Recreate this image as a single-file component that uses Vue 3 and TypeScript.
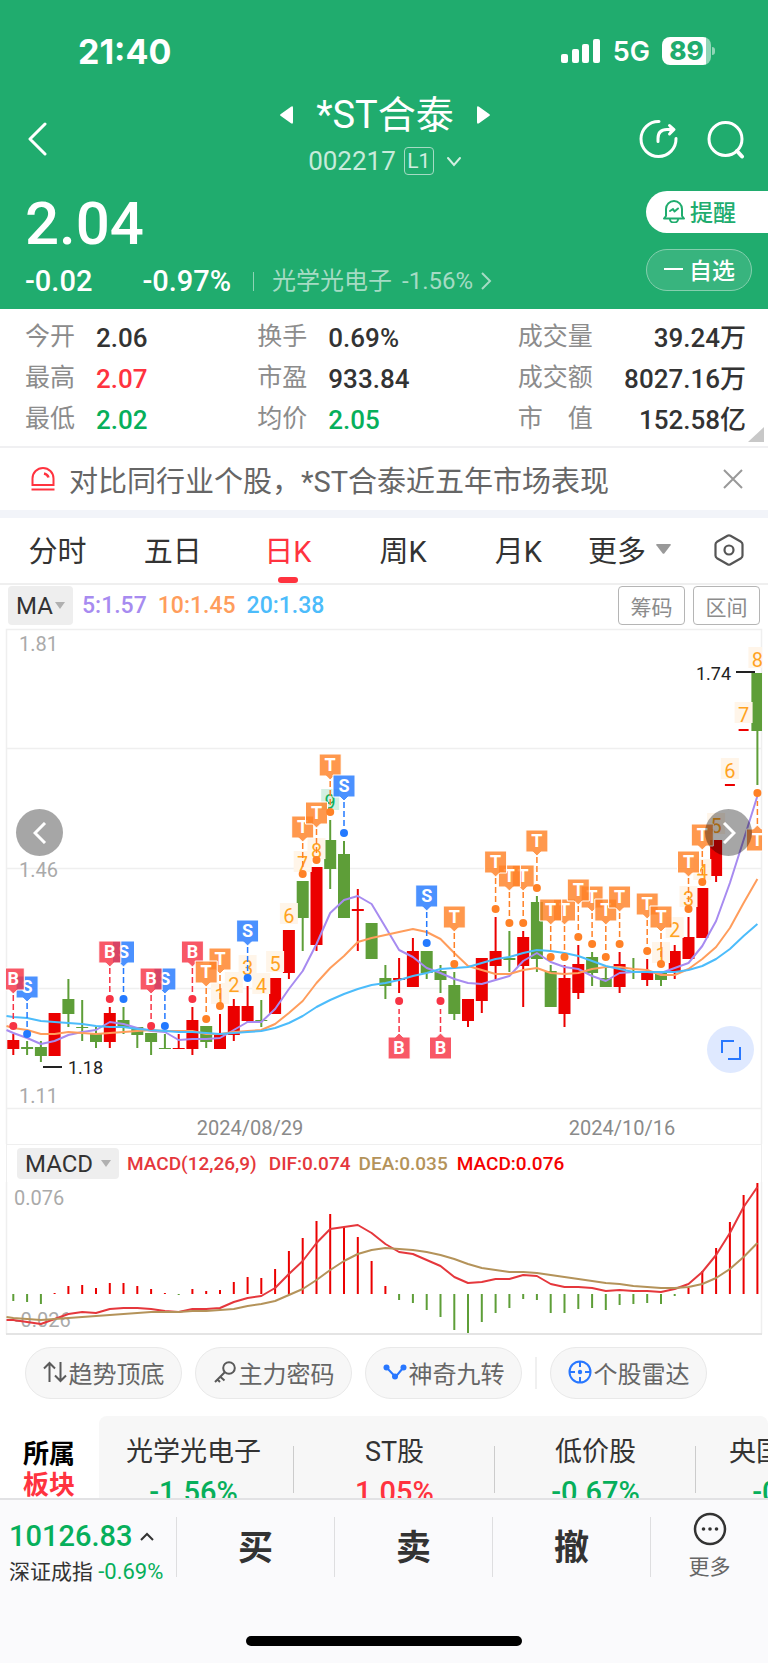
<script setup lang="ts">
import { ref } from 'vue'

type Tone = 'dark' | 'up' | 'down'
type Side = 'r' | 'g'
type Mark = 'B' | 'S' | 'T'

interface Stat { label: string; value: string; tone: Tone }

const stats: Stat[][] = [
  [
    { label: '今开', value: '2.06', tone: 'dark' },
    { label: '最高', value: '2.07', tone: 'up' },
    { label: '最低', value: '2.02', tone: 'down' },
  ],
  [
    { label: '换手', value: '0.69%', tone: 'dark' },
    { label: '市盈', value: '933.84', tone: 'dark' },
    { label: '均价', value: '2.05', tone: 'down' },
  ],
  [
    { label: '成交量', value: '39.24万', tone: 'dark' },
    { label: '成交额', value: '8027.16万', tone: 'dark' },
    { label: '市\u3000值', value: '152.58亿', tone: 'dark' },
  ],
]

const tabs = ['分时', '五日', '日K', '周K', '月K']
const activeTab = ref('日K')

const STEP = 13.78
const px = (i: number): number => Math.round((13.3 + STEP * i) * 10) / 10

// side, body top, body bottom, wick top, wick bottom
const candleRows: [Side, number, number, number, number][] = [
  ['r', 1040, 1049, 1034, 1055], ['g', 1047, 1049, 1041, 1055], ['g', 1047, 1056, 1041, 1062],
  ['r', 1013, 1056, 1013, 1056], ['g', 999, 1014, 979, 1027], ['g', 1027, 1028, 1000, 1041],
  ['g', 1034, 1042, 1027, 1048], ['r', 1013, 1042, 1007, 1048], ['g', 1020, 1028, 1007, 1034],
  ['g', 1027, 1035, 1027, 1048], ['g', 1033, 1042, 1033, 1055], ['g', 1048, 1049, 1034, 1049],
  ['r', 1048, 1049, 1034, 1049], ['r', 1020, 1049, 1007, 1055], ['g', 1026, 1042, 1026, 1048],
  ['r', 1034, 1049, 1014, 1049], ['r', 1006, 1035, 999, 1041], ['r', 1006, 1021, 986, 1023],
  ['g', 1020, 1021, 1000, 1027], ['r', 978, 1014, 978, 1014], ['r', 930, 973, 930, 979],
  ['g', 881, 918, 881, 951], ['r', 867, 945, 867, 951], ['g', 840, 869, 820, 889],
  ['g', 854, 918, 841, 918], ['r', 909, 911, 889, 951], ['g', 923, 959, 923, 959],
  ['g', 978, 986, 965, 999], ['r', 978, 980, 958, 993], ['r', 951, 987, 938, 987],
  ['g', 951, 973, 951, 979], ['g', 971, 980, 965, 993], ['g', 985, 1014, 972, 1020],
  ['r', 999, 1021, 999, 1027], ['r', 958, 1001, 958, 1013], ['r', 951, 966, 917, 979],
  ['g', 958, 960, 931, 972], ['r', 937, 966, 931, 1007], ['g', 902, 959, 896, 972],
  ['g', 971, 1007, 965, 1007], ['r', 978, 1014, 965, 1027], ['r', 964, 993, 945, 999],
  ['g', 957, 973, 952, 986], ['g', 978, 987, 967, 987], ['r', 964, 987, 952, 993],
  ['g', 972, 973, 958, 979], ['r', 971, 980, 959, 986], ['g', 971, 980, 971, 986],
  ['r', 951, 972, 945, 979], ['r', 937, 959, 917, 959], ['r', 888, 938, 888, 938],
  ['r', 840, 876, 840, 882], ['r', 784, 786, 784, 786], ['r', 729, 731, 729, 731],
  ['g', 673, 731, 673, 785],
]
const candles = candleRows.map(([side, top, bottom, high, low], i) => ({
  side, top, bottom, high, low, x: px(i), half: i === 52 || i === 53 ? 5 : i === 45 ? 1 : 6,
}))

const line = (first: number, ys: number[]): string =>
  [`6.5,${first}`, ...ys.map((y, i) => `${px(i)},${y}`)].join(' ')

const ma5 = line(1030, [1033, 1038, 1044, 1041, 1035, 1032, 1030, 1022, 1024, 1028, 1031, 1032, 1040, 1039, 1039,
  1038, 1030, 1022, 1022, 1009, 989, 971, 944, 913, 900, 896, 904, 927, 950, 957, 968, 973, 979, 983, 984, 980,
  976, 961, 953, 962, 967, 969, 976, 981, 973, 972, 972, 973, 968, 963, 946, 921, 883, 840, 796])
const ma10 = line(1026, [1028, 1030, 1034, 1034, 1032, 1033, 1034, 1033, 1032, 1031, 1030, 1031, 1031, 1031, 1034,
  1034, 1032, 1031, 1030, 1024, 1013, 1001, 983, 968, 956, 942, 938, 935, 932, 929, 932, 939, 953, 966, 970, 974,
  974, 970, 968, 973, 974, 973, 969, 967, 967, 969, 970, 975, 975, 969, 959, 947, 928, 903, 879])
const ma20 = line(1016, [1017, 1018, 1021, 1022, 1023, 1024, 1026, 1027, 1027, 1029, 1030, 1031, 1032, 1032, 1033,
  1034, 1033, 1032, 1031, 1028, 1023, 1016, 1007, 1000, 994, 989, 985, 983, 980, 976, 973, 969, 968, 967, 963, 959,
  957, 953, 950, 951, 953, 956, 961, 966, 969, 972, 972, 972, 972, 970, 966, 959, 949, 936, 924])

// mark, candle index, dot y, badge below the dot
const markRows: [Mark, number, number, boolean?][] = [
  ['S', 1, 1034], ['B', 0, 1026], ['S', 8, 999], ['B', 7, 999], ['S', 11, 1026], ['B', 10, 1026],
  ['B', 13, 999], ['T', 15, 1006], ['T', 14, 1019], ['S', 17, 978], ['T', 21, 874], ['T', 22, 860],
  ['T', 23, 812], ['S', 24, 833], ['S', 30, 943], ['T', 32, 964], ['B', 28, 1001, true], ['B', 31, 1001, true],
  ['T', 37, 923], ['T', 36, 923], ['T', 35, 909], ['T', 38, 888], ['T', 40, 957], ['T', 39, 957],
  ['T', 42, 944], ['T', 41, 937], ['T', 43, 957], ['T', 44, 944], ['T', 46, 951], ['T', 47, 964],
  ['T', 49, 909], ['T', 50, 882], ['T', 54, 793, true],
]
const marks = markRows.map(([kind, i, dot, below]) => {
  const x = px(i)
  const top = below ? dot + 36 : dot - 58
  const l = x - 11
  const r = x + 11
  const b = top + 22
  const shape = below
    ? `M${l} ${top}H${x - 4}L${x} ${top - 4}L${x + 4} ${top}H${r}V${b}H${l}Z`
    : `M${l} ${top}H${r}V${b}H${x + 4}L${x} ${b + 4}L${x - 4} ${b}H${l}Z`
  return { kind, x, dot, shape, textY: top + 17, y1: below ? top - 5 : b + 5, y2: below ? dot + 8 : dot - 6 }
})

const countRows: [string, number, number][] = [
  ['1', 15, 996], ['2', 16, 985], ['3', 17, 968], ['4', 18, 986], ['5', 19, 964], ['6', 20, 916], ['7', 21, 864],
  ['8', 22, 851], ['9', 23, 802], ['1', 47, 955], ['2', 48, 930], ['3', 49, 899], ['4', 50, 872], ['5', 51, 826],
  ['6', 52, 771], ['7', 53, 715], ['8', 54, 660],
]
const counts = countRows.map(([n, i, y]) => ({ n, x: px(i), y }))

const ZERO = 1294
const histogram = [1301, 1302, 1304, 1293, 1286, 1285, 1288, 1283, 1283, 1286, 1289, 1293, 1295, 1289, 1291, 1290,
  1282, 1277, 1278, 1269, 1251, 1238, 1221, 1214, 1227, 1237, 1261, 1286, 1300, 1303, 1310, 1317, 1330, 1333, 1322,
  1313, 1308, 1299, 1300, 1313, 1313, 1309, 1308, 1310, 1305, 1304, 1303, 1304, 1296, 1288, 1271, 1248, 1222, 1195,
  1183].map((y, i) => ({ x: px(i), y }))
const dif = line(1320, [1320, 1322, 1324, 1319, 1314, 1312, 1313, 1309, 1308, 1308, 1309, 1311, 1312, 1309, 1309,
  1308, 1302, 1298, 1296, 1288, 1274, 1261, 1243, 1229, 1227, 1225, 1233, 1244, 1252, 1254, 1260, 1266, 1277, 1283,
  1282, 1279, 1279, 1275, 1276, 1284, 1287, 1287, 1288, 1291, 1290, 1291, 1291, 1292, 1289, 1284, 1272, 1255, 1233,
  1207, 1187])
const dea = line(1317, [1318, 1319, 1320, 1319, 1318, 1317, 1316, 1315, 1314, 1313, 1312, 1312, 1312, 1311, 1311,
  1310, 1309, 1306, 1304, 1301, 1295, 1289, 1280, 1270, 1261, 1254, 1250, 1248, 1249, 1250, 1252, 1255, 1259, 1264,
  1268, 1270, 1272, 1272, 1273, 1275, 1277, 1279, 1281, 1283, 1284, 1286, 1287, 1288, 1288, 1287, 1284, 1278, 1269,
  1257, 1243])

const boards: { name: string; change: string; tone: Tone }[] = [
  { name: '光学光电子', change: '-1.56%', tone: 'down' },
  { name: 'ST股', change: '1.05%', tone: 'up' },
  { name: '低价股', change: '-0.67%', tone: 'down' },
  { name: '央国企改革', change: '-0.83%', tone: 'down' },
]
const trades = ['买', '卖', '撤']
</script>

<template>
  <div class="app">
    <header class="head">
      <div class="status">
        <span class="clock">21:40</span>
        <span class="signal">
          <svg width="39" height="25" viewBox="0 0 39 25" fill="#fff" aria-hidden="true">
            <rect x="0" y="15" width="7" height="9" rx="2" />
            <rect x="11" y="10" width="7" height="14" rx="2" />
            <rect x="21" y="5" width="7" height="19" rx="2" />
            <rect x="32" y="0" width="7" height="24" rx="2" />
          </svg>
          <span class="net">5G</span>
          <span class="battery"><b>89</b></span>
        </span>
      </div>

      <div class="titlebar">
        <button class="plain back" aria-label="返回">
          <svg width="20" height="34" viewBox="0 0 20 34" fill="none" stroke="#fff" stroke-width="3" stroke-linecap="round" stroke-linejoin="round"><path d="M17 2 2 17l15 15" /></svg>
        </button>
        <div class="center">
          <div class="name-row">
            <button class="plain" aria-label="上一只"><svg width="13" height="18" viewBox="0 0 13 18" fill="#fff"><path d="M0.500 8.200 11 .7q2-1 2 1v14.600q0 2-2 1L.5 9.800q-.8-.8 0-1.600z" /></svg></button>
            <h1>*ST合泰</h1>
            <button class="plain" aria-label="下一只"><svg width="13" height="18" viewBox="0 0 13 18" fill="#fff"><path d="M12.500 8.200 2 .7q-2-1-2 1v14.600q0 2 2 1l10.500-7.500q.8-.8 0-1.600z" /></svg></button>
          </div>
          <div class="code-row">
            <span>002217</span><span class="level">L1</span>
            <svg width="16" height="11" viewBox="0 0 16 11" fill="none" stroke="#d3eee1" stroke-width="2" stroke-linecap="round"><path d="m2 2 6 7 6-7" /></svg>
          </div>
        </div>
        <div class="actions">
          <button class="plain" aria-label="分享">
            <svg width="40" height="40" viewBox="0 0 40 40" fill="none" stroke="#fff" stroke-width="3" stroke-linecap="round" stroke-linejoin="round"><path d="M20 2.500a17.500 17.500 0 1 0 17 17" /><path d="M19 22.500v-3q0-9 9-9h5" /><path d="m30.500 6.500 4.500 4-4.500 4.500" fill="#fff" /></svg>
          </button>
          <button class="plain" aria-label="搜索">
            <svg width="40" height="40" viewBox="0 0 40 40" fill="none" stroke="#fff" stroke-linecap="round"><circle cx="19.500" cy="20" r="16.500" stroke-width="3" /><path d="m31 32 5 5.500" stroke-width="4" /></svg>
          </button>
        </div>
      </div>

      <div class="quote">
        <div class="quote-left">
          <div class="price">2.04</div>
          <div class="change">
            <span>-0.02</span><span class="pct">-0.97%</span><i class="bar"></i>
            <a href="#" class="sector"><span>光学光电子</span><span>-1.56%</span><svg width="11" height="18" viewBox="0 0 11 18" fill="none" stroke="#a5dbc4" stroke-width="2"><path d="m1 1 8 8-8 8" /></svg></a>
          </div>
        </div>
        <div class="quote-right">
          <button class="remind">
            <svg width="24" height="24" viewBox="0 0 24 24" fill="none" stroke="#20ac6e" stroke-width="2" stroke-linecap="round" stroke-linejoin="round"><path d="M4 17V10a8 8 0 0 1 16 0v7l2 2.500H2z" /><path d="M8 20.500a4 3 0 0 0 8 0" /><path d="m8 12 3-2 1.500 2.500 3.500-3" /></svg>
            提醒
          </button>
          <button class="watch"><i></i>自选</button>
        </div>
      </div>
    </header>

    <main class="body">
      <section class="stats">
        <dl v-for="(col, c) in stats" :key="c">
          <div v-for="s in col" :key="s.label"><dt>{{ s.label }}</dt><dd :class="s.tone">{{ s.value }}</dd></div>
        </dl>
        <i class="corner"></i>
      </section>

      <section class="notice">
        <svg width="24" height="26" viewBox="0 0 24 26" fill="none" stroke="#ff333f" stroke-width="2"><path d="M1.500 19V12.500a10.500 10.500 0 0 1 21 0V19z" /><path d="M0.500 23.500h23" /><path d="M13 7.500q3.500.8 4.500 4" stroke-width="2.500" /></svg>
        <p>对比同行业个股，*ST合泰近五年市场表现</p>
        <button class="plain" aria-label="关闭"><svg width="20" height="20" viewBox="0 0 20 20" stroke="#999" stroke-width="2"><path d="m1 1 18 18M19 1 1 19" /></svg></button>
      </section>

      <nav class="tabs">
        <button v-for="t in tabs" :key="t" :class="['tab', { on: activeTab === t }]" @click="activeTab = t">{{ t }}</button>
        <button class="more">更多<svg width="15" height="10" viewBox="0 0 15 10" fill="#999"><path d="M1 0h13q1.500 0 .6 1.200L8.500 9.300q-1 1-2 0L.4 1.200Q-.5 0 1 0z" /></svg></button>
        <button class="plain gear" aria-label="设置"><svg width="30" height="32" viewBox="0 0 30 32" fill="none" stroke="#555" stroke-width="2.200" stroke-linejoin="round"><path d="M13.500 1.800q1.500-.8 3 0l10.500 6q1.500 1 1.500 2.600v11.200q0 1.600-1.500 2.600l-10.500 6q-1.500.8-3 0L3 24.200q-1.500-1-1.500-2.600V10.400Q1.500 8.800 3 7.800z" /><circle cx="15" cy="16" r="4.500" /></svg></button>
      </nav>

      <div class="ma-row">
        <button class="pill">MA<svg width="10" height="7" viewBox="0 0 10 7" fill="#b0b0b0"><path d="M0 0h10L5 7z" /></svg></button>
        <span class="m5">5:1.57</span><span class="m10">10:1.45</span><span class="m20">20:1.38</span>
        <button class="outline first">筹码</button><button class="outline">区间</button>
      </div>

      <div class="kline">
        <svg class="plot" viewBox="0 626 768 518" role="img" aria-label="日K线">
          <defs><clipPath id="frame"><rect x="6" y="626" width="756" height="518" /></clipPath></defs>
          <g stroke="#efefef" stroke-width="1.500" fill="none">
            <path d="M6.500 1144V629.500H761.500V1144M6.500 748.500H761.500M6.500 868.500H761.500M6.500 988.500H761.500M6.500 1108.500H761.500" />
          </g>
          <g class="axis"><text x="19" y="651">1.81</text><text x="19" y="877">1.46</text><text x="19" y="1103">1.11</text></g>
          <g class="date"><text x="250" y="1135">2024/08/29</text><text x="622" y="1135">2024/10/16</text></g>
          <g clip-path="url(#frame)">
            <g v-for="(c, i) in candles" :key="'c' + i" :fill="c.side === 'r' ? '#eb0000' : '#5e9e38'">
              <rect :x="c.x - 1" :y="c.high" width="2" :height="c.low - c.high" />
              <rect :x="c.x - c.half" :y="c.top" :width="c.half * 2" :height="c.bottom - c.top" />
            </g>
            <g v-for="(n, i) in counts" :key="'n' + i" :class="['count', { nine: n.n === '9' }]">
              <rect :x="n.x - 9" :y="n.y - 13" width="18" height="21" />
              <text :x="n.x" :y="n.y + 7">{{ n.n }}</text>
            </g>
            <g fill="none" stroke-width="2" stroke-linejoin="round">
              <polyline :points="ma5" stroke="#a78bf0" />
              <polyline :points="ma10" stroke="#ff9d5c" />
              <polyline :points="ma20" stroke="#4cbcfb" />
            </g>
            <g v-for="(m, i) in marks" :key="'m' + i" :class="['mark', m.kind]">
              <line :x1="m.x" :x2="m.x" :y1="m.y1" :y2="m.y2" />
              <circle :cx="m.x" :cy="m.dot" r="4" />
              <path :d="m.shape" />
              <text :x="m.x" :y="m.textY">{{ m.kind }}</text>
            </g>
          </g>
          <g class="extreme">
            <path d="M43 1067H62M736 672H755" />
            <text x="68" y="1074">1.18</text><text x="696" y="680">1.74</text>
          </g>
        </svg>
        <button class="round prev" aria-label="前一段"><svg width="14" height="22" viewBox="0 0 14 22" fill="none" stroke="#fff" stroke-width="3"><path d="M12 1 2 11l10 10" /></svg></button>
        <button class="round next" aria-label="后一段"><svg width="14" height="22" viewBox="0 0 14 22" fill="none" stroke="#fff" stroke-width="3"><path d="m2 1 10 10L2 21" /></svg></button>
        <button class="round expand" aria-label="全屏"><svg width="22" height="22" viewBox="0 0 22 22" fill="none" stroke="#2877ff" stroke-width="2"><path d="M14 2H2v12M20 8v12H8" /></svg></button>
      </div>

      <div class="macd-row">
        <button class="pill">MACD<svg width="10" height="7" viewBox="0 0 10 7" fill="#b0b0b0"><path d="M0 0h10L5 7z" /></svg></button>
        <span class="c-dif">MACD(12,26,9)</span><span class="c-dif v">DIF:0.074</span><span class="c-dea">DEA:0.035</span><span class="c-macd">MACD:0.076</span>
      </div>
      <svg class="plot" viewBox="0 1182 768 154" role="img" aria-label="MACD">
        <path d="M6.500 1182V1334M761.500 1182V1334" stroke="#efefef" stroke-width="1.500" />
        <path d="M6 1334H762" stroke="#e4e4e4" stroke-width="2" />
        <g class="axis"><text x="14" y="1205">0.076</text><text x="15" y="1327">-0.026</text></g>
        <rect v-for="(h, i) in histogram" :key="i" :x="h.x - 1" :y="Math.min(h.y, ZERO)" width="2" :height="Math.abs(h.y - ZERO)" :fill="h.y > ZERO ? '#5e9e38' : '#eb0000'" />
        <g fill="none" stroke-width="2" stroke-linejoin="round">
          <polyline :points="dif" stroke="#e5373c" /><polyline :points="dea" stroke="#b4935a" />
        </g>
      </svg>

      <div class="chips">
        <button><svg width="24" height="22" viewBox="0 0 24 22" fill="none" stroke="#5a5a5a" stroke-width="2"><path d="M6.500 21V2M1 7.500 6.500 2 12 7.500M17.500 1v19M23 14.500 17.500 20 12 14.500" /></svg>趋势顶底</button>
        <button><svg width="24" height="22" viewBox="0 0 24 22" fill="none" stroke="#5a5a5a" stroke-width="2"><circle cx="16" cy="7" r="5.800" /><path d="M12 11 2 21M7 15.500l4.500 4M4 18l3 3" /></svg>主力密码</button>
        <button><svg width="24" height="22" viewBox="0 0 24 22" fill="#2877ff"><path d="M4 7l8.500 9L20 7" fill="none" stroke="#2877ff" stroke-width="2" /><circle cx="3.500" cy="6.500" r="3" /><circle cx="20.500" cy="6.500" r="3" /><circle cx="12" cy="15.500" r="3" /></svg>神奇九转</button>
        <i></i>
        <button><svg width="24" height="24" viewBox="0 0 24 24" fill="none" stroke="#2877ff" stroke-width="2"><circle cx="12" cy="12" r="10.500" /><path d="M12 1v6M12 17v6M1 12h6M17 12h6" /><circle cx="12" cy="12" r="2.200" fill="#2877ff" stroke="none" /></svg>个股雷达</button>
      </div>

      <section class="boards">
        <h2>所属<em>板块</em></h2>
        <div class="board-list">
          <a v-for="b in boards" :key="b.name" href="#"><span>{{ b.name }}</span><span :class="['chg', b.tone]">{{ b.change }}</span></a>
        </div>
      </section>
    </main>

    <footer class="foot">
      <div class="bar-row">
        <button class="index">
          <span class="idx">10126.83<svg width="14" height="9" viewBox="0 0 14 9" fill="none" stroke="#333" stroke-width="2"><path d="m1 8 6-6 6 6" /></svg></span>
          <span class="idx-name">深证成指 <span class="down">-0.69%</span></span>
        </button>
        <button v-for="t in trades" :key="t" class="trade">{{ t }}</button>
        <button class="others">
          <svg width="34" height="34" viewBox="0 0 34 34" fill="#333"><circle cx="17" cy="17" r="15" fill="none" stroke="#333" stroke-width="2.500" /><circle cx="10.500" cy="17" r="1.800" /><circle cx="17" cy="17" r="1.800" /><circle cx="23.500" cy="17" r="1.800" /></svg>
          更多
        </button>
      </div>
      <div class="home"></div>
    </footer>
  </div>
</template>

<style>
body { margin: 0; background: #fff; }
</style>

<style scoped>
.app { display: flex; flex-direction: column; height: 100vh; overflow: hidden; font-family: Roboto, "Noto Sans CJK SC", sans-serif; color: #333; }
.app * { box-sizing: border-box; }
button { border: 0; padding: 0; background: none; font: inherit; color: inherit; cursor: pointer; white-space: nowrap; }
svg { display: block; flex: none; }
a { color: inherit; text-decoration: none; }
h1, h2, p, dl, dd { margin: 0; font-weight: 400; }
.plain { display: flex; align-items: center; }
.dark { color: #333; } .up { color: #ff333f; } .down { color: #07af5b; }

.head { flex: none; background: #20ac6e; color: #fff; padding-bottom: 16px; }
.status { display: flex; justify-content: space-between; align-items: center; padding: 34px 56px 0 78px; height: 68px; font-family: Inter, sans-serif; }
.clock { font-size: 34px; font-weight: 700; }
.signal { display: flex; align-items: center; }
.net { font-size: 27px; font-weight: 600; margin: 0 12px 0 13px; }
.battery { position: relative; width: 49px; height: 28px; border-radius: 8px; background: linear-gradient(90deg, #fff 90%, #90d6b7 90%); color: #20ac6e; text-align: center; line-height: 28px; font-size: 26px; margin-right: 1px; }
.battery b { font-weight: 800; }
.battery::after { content: ""; position: absolute; right: -4px; top: 10px; width: 3px; height: 8px; border-radius: 0 3px 3px 0; background: #90d6b7; }
.titlebar { display: grid; grid-template-columns: 1fr auto 1fr; align-items: center; padding: 23px 22px 0 28px; height: 112px; }
.back { justify-self: start; }
.center { padding: 0 4px 4px 0; }
.name-row { display: flex; align-items: center; justify-content: center; gap: 23px; height: 48px; }
h1 { font-size: 38px; line-height: 48px; }
.code-row { display: flex; align-items: center; justify-content: center; gap: 8px; height: 44px; font-size: 26px; color: #c7ebdb; }
.code-row svg { margin-left: 4px; }
.level { width: 30px; height: 28px; border: 1px solid #a5dbc4; border-radius: 4px; font-size: 21px; line-height: 27px; text-align: center; color: #d3eee1; }
.actions { display: flex; justify-content: flex-end; gap: 27px; }
.quote { display: flex; justify-content: space-between; height: 113px; }
.quote-left { padding-left: 25px; padding-top: 1px; }
.price { font-size: 60px; font-weight: 500; line-height: 85px; }
.change { display: flex; align-items: center; font-size: 29px; font-weight: 500; line-height: 30px; }
.pct { margin-left: 50px; }
.bar { width: 1px; height: 19px; background: #8fd3b5; margin: 0 18px 0 22px; }
.sector { display: flex; align-items: center; gap: 10px; font-size: 24px; font-weight: 400; color: #a5dbc4; }
.sector svg { margin-left: -2px; }
.quote-right { display: flex; flex-direction: column; gap: 16px; padding-top: 11px; width: 122px; }
.remind { display: flex; align-items: center; gap: 4px; height: 42px; padding-left: 16px; border-radius: 21px 0 0 21px; background: #fff; color: #20ac6e; font-size: 23px; font-weight: 500; padding-bottom: 2px; }
.watch { display: flex; align-items: center; gap: 6px; width: 106px; height: 42px; padding-left: 17px; border: 1px solid #85cfae; border-radius: 21px; background: #38b47e; font-size: 23px; font-weight: 500; padding-bottom: 2px; }
.watch i { width: 19px; height: 2px; background: #fff; }

.body { flex: 1; min-height: 0; overflow: hidden; display: flex; flex-direction: column; }
.body > * { flex: none; }
.stats { position: relative; display: grid; grid-template-columns: 232fr 260fr 228fr; padding: 7px 22px 4px 25px; border-bottom: 2px solid #f0f0f2; font-size: 25px; line-height: 41px; height: 139px; }
.stats div { display: flex; gap: 21px; height: 41px; }
.stats dt { color: #8c8c8c; white-space: pre; }
.stats dd { font-size: 26px; font-weight: 500; line-height: 44px; white-space: nowrap; }
.stats dl:last-of-type div { justify-content: space-between; gap: 0; }
.corner { position: absolute; right: 4px; bottom: 4px; border-left: 16px solid transparent; border-bottom: 15px solid #c8c8c8; }
.notice { display: flex; align-items: center; height: 62px; padding: 0 25px 0 31px; color: #666; }
.notice p { flex: 1; margin-left: 14px; font-size: 29px; white-space: nowrap; }
.tabs { display: flex; align-items: center; height: 75px; border-top: 8px solid #f2f4f9; border-bottom: 2px solid #efefef; font-size: 29px; }
.tab { position: relative; flex: 0 0 15%; height: 65px; padding-bottom: 4px; }
.tab.on { color: #ff333f; }
.tab.on::after { content: ""; position: absolute; left: 50%; bottom: 0; width: 20px; height: 6px; margin-left: -10px; border-radius: 3px; background: #ff333f; }
.more { display: flex; align-items: center; gap: 10px; height: 65px; padding-bottom: 4px; margin-left: 12px; }
.gear { margin: 0 24px 0 auto; padding-bottom: 2px; }
.ma-row { display: flex; align-items: center; height: 41px; padding: 0 8px; font-size: 23px; font-weight: 500; }
.ma-row .pill { height: 39px; width: 65px; margin-right: 9px; }
.pill { display: flex; align-items: center; justify-content: center; gap: 2px; background: #eee; border-radius: 4px; font-size: 24px; font-weight: 400; }
.m5 { color: #a78bf0; } .m10 { color: #ff9d5c; margin-left: 11px; } .m20 { color: #4cbcfb; margin-left: 11px; }
.outline { width: 67px; height: 39px; margin-left: 8px; border: 1px solid #b5b5b5; border-radius: 4px; color: #8c8c8c; font-size: 21px; font-weight: 400; }
.outline.first { margin-left: auto; }
.kline { position: relative; }
.plot { width: 100%; height: auto; }
.axis text { font-size: 20px; fill: #aaa; }
.date text { font-size: 20px; fill: #8a8a8a; text-anchor: middle; }
.extreme path { stroke: #222; stroke-width: 2; }
.extreme text { font-size: 18px; fill: #222; }
.count rect { fill: #fff5e9; } .count text { font-size: 20px; fill: #ffa31f; text-anchor: middle; }
.count.nine rect { fill: #d3efe2; } .count.nine text { fill: #10b060; }
.mark line { stroke-width: 1.5; stroke-dasharray: 6 3; }
.mark path { fill-opacity: 0.82; stroke: #fff; stroke-width: 1; }
.mark text { fill: #fff; font-size: 18px; font-weight: 700; text-anchor: middle; font-family: Roboto, sans-serif; }
.mark.B { fill: #f73344; } .mark.S { fill: #2379ff; } .mark.T { fill: #ff8126; }
.mark.B line { stroke: #f73344; } .mark.S line { stroke: #2379ff; } .mark.T line { stroke: #ff8126; }
.round { position: absolute; display: flex; align-items: center; justify-content: center; width: 47px; height: 47px; border-radius: 50%; background: rgba(0, 0, 0, 0.35); }
.prev { left: 16px; top: 183px; } .next { right: 16px; top: 183px; }
.expand { right: 14px; top: 400px; background: #dfe9ff; }
.macd-row { display: flex; align-items: center; height: 38px; margin: 0 6px; padding: 0 10px; border: 1px solid #efefef; border-width: 1px 1px 0; font-size: 19px; font-weight: 500; white-space: nowrap; }
.macd-row .pill { width: 102px; height: 31px; gap: 8px; margin-right: 8px; }
.c-dif { color: #e5373c; } .c-dif.v { margin-left: 12px; } .c-dea { color: #b4935a; margin-left: 8px; } .c-macd { color: #f50000; margin-left: 9px; }
.chips { display: flex; align-items: center; gap: 13px; padding: 11px 25px 0; }
.chips button { display: flex; align-items: center; justify-content: center; gap: 2px; width: 157px; height: 52px; border: 1px solid #e9e9e9; border-radius: 26px; background: #f7f7f7; color: #666; font-size: 24px; padding-bottom: 2px; }
.chips i { width: 2px; height: 32px; background: #f0f0f0; }
.boards { display: flex; margin-top: 17px; }
h2 { width: 99px; padding-left: 23px; padding-top: 23px; font-size: 26px; line-height: 31px; font-weight: 700; color: #000; }
h2 em { display: block; font-style: normal; color: #ff333f; }
.board-list { flex: 1; min-width: 0; display: flex; overflow: hidden; height: 110px; padding-top: 16px; border-radius: 8px; background: #f7f7f7; }
.board-list a { position: relative; flex: none; width: 201px; text-align: center; }
.board-list a:first-child { width: 195px; padding-right: 6px; }
.board-list a::after { content: ""; position: absolute; right: 0; top: 14px; width: 1px; height: 47px; background: #ccc; }
.board-list span { display: block; font-size: 27px; line-height: 40px; }
.board-list .chg { font-size: 29px; font-weight: 500; line-height: 40px; }

.foot { flex: none; border-top: 2px solid #e2e2e4; background: #fafafc; padding-bottom: 17px; }
.bar-row { display: grid; grid-template-columns: 176fr 158fr 158fr 158fr 118fr; padding: 17px 0; height: 136px; align-items: start; }
.bar-row button { height: 60px; }
.index { text-align: left; padding-left: 9px; }
.idx { display: flex; align-items: center; gap: 8px; font-size: 29px; font-weight: 500; line-height: 38px; color: #07af5b; }
.idx-name { display: block; font-size: 21px; line-height: 34px; }
.idx-name .down { font-size: 22px; }
.trade { border-left: 1px solid #dedee0; padding-top: 2px; font-size: 35px; font-weight: 700; line-height: 60px; }
.others { display: flex; flex-direction: column; align-items: center; border-left: 1px solid #dedee0; font-size: 21px; color: #666; line-height: 42px; }
.others svg { margin-top: -5px; }
.home { width: 36%; height: 10px; margin: 0 auto; border-radius: 5px; background: #000; }
</style>
